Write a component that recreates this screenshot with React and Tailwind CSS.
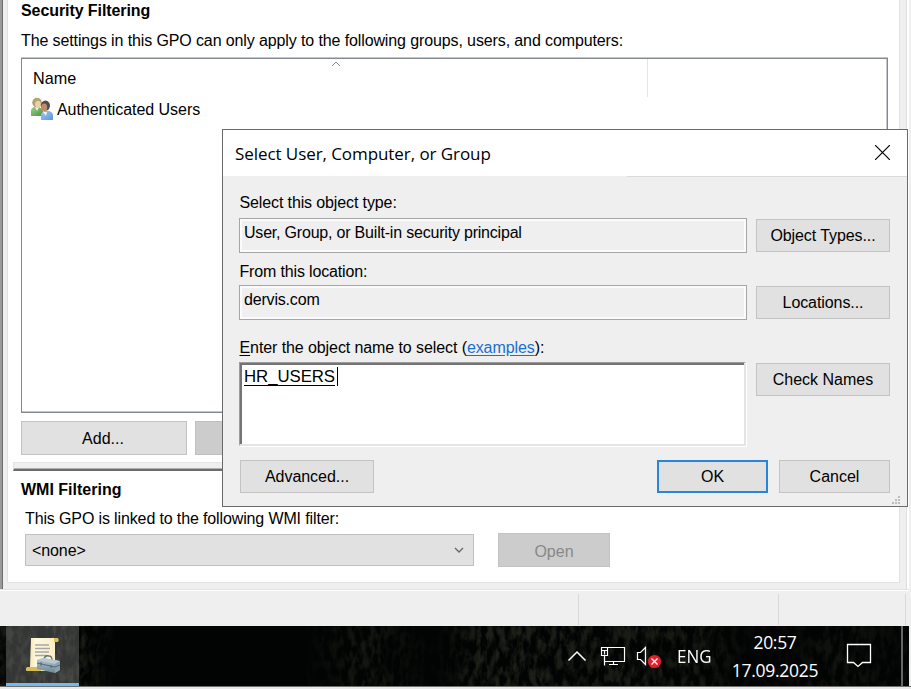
import React from "react";

const SANS = "font-['Liberation_Sans',Arial,sans-serif]";
const SEGOE = "font-['Open_Sans','Noto_Sans',sans-serif]";

function Button({ className = "", children }) {
  return (
    <button
      className={`flex h-[33px] shrink-0 items-center justify-center border border-[#c3c3c3] bg-[#e1e1e1] pt-px text-[16px] leading-5 whitespace-nowrap ${className}`}
    >
      {children}
    </button>
  );
}

function UsersIcon() {
  return (
    <svg className="block h-6 w-6 shrink-0" viewBox="0 0 24 24">
      <defs>
        <linearGradient id="green" x1="0" y1="0" x2="1" y2="1">
          <stop offset="0" stopColor="#9ccf8a" />
          <stop offset="1" stopColor="#4c9440" />
        </linearGradient>
        <linearGradient id="blue" x1="0" y1="0" x2="1" y2="1">
          <stop offset="0" stopColor="#9fc8f2" />
          <stop offset="1" stopColor="#5b96dc" />
        </linearGradient>
      </defs>
      <path d="M1 19v-5q0-3 3-4h5q3 1 4 4v5z" fill="url(#green)" />
      <path d="M5 10l2 4 2-4z" fill="#f2f6ea" />
      <ellipse cx="7" cy="5.600" rx="4.800" ry="4.800" fill="#b3a36c" />
      <ellipse cx="8" cy="7.200" rx="2.800" ry="3.500" fill="#efd0a6" />
      <path d="M11 23v-4q0-4 4-5h4q4 1 4 5v4z" fill="url(#blue)" />
      <path d="M13 15l3 4 1-4z" fill="#eef5fc" />
      <ellipse cx="15.400" cy="8.600" rx="4.600" ry="5.200" fill="#4d4d50" />
      <ellipse cx="14.200" cy="10.600" rx="3" ry="4" fill="#c08e66" />
    </svg>
  );
}

function GpmcIcon() {
  return (
    <svg className="block h-[37px] w-[35px]" viewBox="0 0 35 37">
      <defs>
        <linearGradient id="paper" x1="0" y1="0" x2="1" y2="0">
          <stop offset="0" stopColor="#efdc94" />
          <stop offset=".3" stopColor="#fdf8df" />
          <stop offset="1" stopColor="#f8ecc0" />
        </linearGradient>
        <linearGradient id="box" x1="0" y1="0" x2="0" y2="1">
          <stop offset="0" stopColor="#b5c5cf" />
          <stop offset="1" stopColor="#6f8795" />
        </linearGradient>
      </defs>
      <path d="M5 1h26q2 0 1 4h-3v24l-3 5H1q-2-1 0-4h3z" fill="url(#paper)" />
      <path d="M28 1h4q1 2 0 4h-4zM1 30h14v4H1q-1-2 0-4z" fill="#d9bd54" />
      <path d="M9 8h14M9 11.500h15M9 15h14M9 18.500h12" stroke="#a7a5a6" strokeWidth="1.300" />
      <path d="M18 22q1-4 5-3 3 0 3 4" fill="none" stroke="#62747e" strokeWidth="1.400" />
      <path d="M11 23l6-2 17 3v9l-5 3-18-4z" fill="url(#box)" />
      <path d="M11 23l6-2 17 3-5 3z" fill="#b7c8d2" />
      <path d="M29 27v9l5-3v-9z" fill="#8da2ae" />
      <path d="M11 26l18 4 5-2M15 25v4M25 28v3" fill="none" stroke="#4e6370" strokeWidth=".9" />
    </svg>
  );
}

function Foliage() {
  return (
    <svg className="absolute inset-0 h-full w-full opacity-65" preserveAspectRatio="none">
      <defs>
        <filter id="leaves" x="0" y="0" width="100%" height="100%" colorInterpolationFilters="sRGB">
          <feTurbulence type="fractalNoise" baseFrequency="0.16 0.07" numOctaves="4" seed="8" />
          <feColorMatrix values="0 0 0 0 .2  0 0 0 0 .22  0 0 0 0 .16  3.2 0 0 0 -1.25" />
        </filter>
        <linearGradient id="patches">
          <stop offset="0" stopColor="#999" />
          <stop offset=".09" stopColor="#bbb" />
          <stop offset=".13" stopColor="#000" />
          <stop offset=".33" stopColor="#000" />
          <stop offset=".4" stopColor="#999" />
          <stop offset=".48" stopColor="#111" />
          <stop offset=".53" stopColor="#ddd" />
          <stop offset=".76" stopColor="#aaa" />
          <stop offset=".83" stopColor="#222" />
          <stop offset=".92" stopColor="#777" />
          <stop offset="1" stopColor="#333" />
        </linearGradient>
        <mask id="patchMask">
          <rect width="100%" height="100%" fill="url(#patches)" />
        </mask>
      </defs>
      <g mask="url(#patchMask)">
        <rect width="100%" height="100%" filter="url(#leaves)" />
      </g>
    </svg>
  );
}

function Taskbar() {
  return (
    <div className={`relative flex h-[60px] w-[909px] shrink-0 overflow-hidden bg-[#020303] text-white ${SEGOE}`}>
      <Foliage />
      <div className="relative ml-1.5 flex h-full w-[73px] shrink-0 flex-col items-center border-b-[3px] border-[#76b9ed] bg-white/20 pt-[11px] pl-[2px]">
        <GpmcIcon />
      </div>
      <svg className="relative ml-[488px] h-[60px] w-[96px] shrink-0" viewBox="0 0 96 60" fill="none" stroke="#fff">
        <path d="M1.500 34.500l8.500-8.500 8.500 8.500" strokeWidth="1.500" />
        <path d="M40 21.500h17.500v14H37.500M46.500 35.500v3M42 38.500h9" strokeWidth="1.200" />
        <path d="M34.500 21.500h6v8h-6zM34.500 24.500h6M37.500 24.500v4M37.500 29.500v10" strokeWidth="1.200" />
        <path d="M70.500 26.500h3l5-5v17l-5-5h-3z" strokeWidth="1.200" />
        <circle cx="87.500" cy="35.500" r="6.600" fill="#e0202c" stroke="none" />
        <path d="M84.500 32.500l6 6M90.500 32.500l-6 6" strokeWidth="1.300" />
      </svg>
      <div className="relative ml-[14px] flex h-full w-[35px] shrink-0 items-center text-[18px] leading-6">
        <span className="origin-left scale-x-[0.94]">ENG</span>
      </div>
      <div className="relative ml-[17px] flex h-full w-[92px] shrink-0 flex-col items-center pt-[2px] text-[17.500px] leading-7 whitespace-nowrap">
        <span className="tracking-[-0.3px]">20:57</span>
        <span className="tracking-[-0.250px]">17.09.2025</span>
      </div>
      <svg className="relative mt-[17px] ml-[25px] h-[26px] w-[28px] shrink-0" viewBox="0 0 28 26" fill="none" stroke="#fff" strokeWidth="1.300">
        <path d="M1.500 1.500h23v18h-8l-4.500 4-4.500-4h-6z" />
      </svg>
      <div className="relative ml-[27px] h-full w-0.5 shrink-0 bg-[#666]" />
    </div>
  );
}

function ReadOnlyField({ children }) {
  return (
    <div className="h-[35px] w-[508px] shrink-0 border border-[#a5a5a5] bg-[#efefef] pt-[4px] pl-1 text-[16px] leading-5 whitespace-nowrap shadow-[inset_0_0_0_2px_#fbfbfb]">
      {children}
    </div>
  );
}

function Dialog() {
  return (
    <div className={`absolute top-[129px] left-[222px] flex h-[378px] w-[686px] flex-col border border-[#6a6a6a] bg-[#efefef] text-black ${SANS}`}>
      <div className="flex h-[46px] shrink-0 items-center justify-between bg-white pr-[17px] pl-3">
        <span className={`pt-px text-[17px] leading-6 tracking-[-0.070px] whitespace-nowrap ${SEGOE}`}>
          Select User, Computer, or Group
        </span>
        <svg className="mb-px h-[15px] w-[15px]" viewBox="0 0 15 15">
          <path d="M0 0l15 15M15 0L0 15" stroke="#000" strokeWidth="1.200" />
        </svg>
      </div>
      <div className="ml-auto h-px w-[280px] shrink-0 bg-[#dadada]" />
      <div className="flex h-[328px] flex-col pl-4 text-[16px] leading-5">
        <div className="mt-[16px] h-5 pl-[0.500px] tracking-[-0.120px]">Select this object type:</div>
        <div className="mt-[5px] flex items-start gap-[9px]">
          <ReadOnlyField>
            <span className="tracking-[-0.200px]">User, Group, or Built-in security principal</span>
          </ReadOnlyField>
          <Button className="mt-px w-[134px] tracking-[-0.080px]">Object Types...</Button>
        </div>
        <div className="mt-[9px] h-5 pl-[0.500px] tracking-[-0.160px]">From this location:</div>
        <div className="mt-[3px] flex items-start gap-[9px]">
          <ReadOnlyField>
            <span className="tracking-[-0.180px]">dervis.com</span>
          </ReadOnlyField>
          <Button className="mt-px w-[134px] tracking-[-0.080px]">Locations...</Button>
        </div>
        <div className="mt-[18px] h-5 pl-[0.500px] tracking-[-0.090px] whitespace-nowrap">
          <span className="underline underline-offset-2">E</span>nter the object name to select (
          <a className="text-[#1770cf] underline underline-offset-2">examples</a>):
        </div>
        <div className="mt-[4px] flex items-start">
          <div className="flex h-[84px] w-[507px] border-t border-r-2 border-b-2 border-l border-t-[#9c9c9c] border-r-[#e4e4e4] border-b-[#e4e4e4] border-l-[#9c9c9c] bg-white pt-1 pl-1 shadow-[inset_2px_2px_0_#747474,1px_1px_0_#fff]">
            <span className="h-5 text-[16.800px] leading-5 tracking-[-0.050px] underline decoration-1 underline-offset-[3px]">HR_USERS</span>
            <span className="ml-[2px] h-[19px] w-[1px] bg-black" />
          </div>
          <Button className="mt-px ml-[10px] w-[134px]">Check Names</Button>
        </div>
        <div className="mt-[14px] ml-px flex">
          <Button className="w-[134px] tracking-[-0.030px]">Advanced...</Button>
          <Button className="ml-[283px] w-[111px] border-2! border-[#2786dc]!">OK</Button>
          <Button className="ml-[11px] w-[111px]">Cancel</Button>
        </div>
      </div>
      <svg className="absolute right-[6px] bottom-[1px] h-[9px] w-[9px]" fill="#bdbdbd">
        <path d="M6 0h2v2h-2zM3 3h2v2h-2zM6 3h2v2h-2zM0 6h2v2h-2zM3 6h2v2h-2zM6 6h2v2h-2z" />
      </svg>
    </div>
  );
}

function SecurityPanel() {
  return (
    <div className="flex h-[583px] w-[893px] shrink-0 flex-col border-r border-b border-l border-[#e2e2e2] bg-white">
      <div className="ml-[13px] h-5 pt-px text-[16px] leading-5 font-bold tracking-[-0.080px]">Security Filtering</div>
      <div className="mt-[11px] ml-[13px] h-5 text-[16px] leading-5 tracking-[-0.115px] whitespace-nowrap">
        The settings in this GPO can only apply to the following groups, users, and computers:
      </div>
      <div className="mt-[7px] ml-[13px] h-[355px] w-[867px] shrink-0 border border-[#828790] shadow-[0_-1px_0_#c4c8cd,inset_-1px_0_0_#c4c8cd,inset_0_-1px_0_#c4c8cd]">
        <div className="flex h-[38px] w-[626px] border-r border-[#e5e5e5]">
          <span className="mt-[9px] ml-[11px] w-[298px] text-[16.200px] leading-5">Name</span>
          <svg className="mt-[2px] h-[6px] w-[10px]" viewBox="0 0 10 6" fill="none" stroke="#888">
            <path d="M1 5l4-4 4 4" />
          </svg>
        </div>
        <div className="ml-[8px] flex h-6 items-center">
          <UsersIcon />
          <span className="mt-px ml-[3px] text-[16px] leading-5 tracking-[-0.050px]">Authenticated Users</span>
        </div>
      </div>
      <div className="mt-[8px] ml-[13px] flex gap-[8px]">
        <Button className="h-[34px]! w-[166px] pt-0.5! pr-0.5">Add...</Button>
        <Button className="h-[34px]! w-[166px] border-[#bfbfbf]! bg-[#cccccc]!" />
      </div>
      <div className="mt-[7px] ml-[5px] h-[9px] shrink-0 border-t border-b-2 border-l border-t-[#e5e5e5] border-b-[#6c6c6c] border-l-[#e5e5e5] bg-[#efefef] shadow-[inset_0_-1px_0_#b0b0b0]" />
      <div className="mt-[9px] ml-[13px] h-5 text-[16px] leading-5 font-bold">WMI Filtering</div>
      <div className="mt-[9px] ml-[17px] h-5 text-[16px] leading-5 tracking-[-0.130px]">
        This GPO is linked to the following WMI filter:
      </div>
      <div className="mt-[4px] ml-[17px] flex items-center gap-[24px]">
        <div className="flex h-8 w-[449px] items-center justify-between border border-[#c0c0c0] bg-[#e1e1e1] pr-[9px] pl-[6px] text-[16px]">
          <span className="pt-0.5 tracking-[-0.100px]">&lt;none&gt;</span>
          <svg className="h-[6px] w-[10px]" viewBox="0 0 10 6" fill="none" stroke="#666" strokeWidth="1.300">
            <path d="M1 1l4 4 4-4" />
          </svg>
        </div>
        <Button className="h-[34px]! w-[112px] border-[#c3c3c3]! bg-[#cccccc]! pt-[3px]! text-[#888]">Open</Button>
      </div>
    </div>
  );
}

export default function App() {
  return (
    <div className={`relative flex h-[689px] w-[911px] flex-col overflow-hidden bg-[#efefef] text-black ${SANS}`}>
      <div className="flex h-[589px] shrink-0">
        <div className="w-0.5 bg-[#9a9a9a]" />
        <div className="w-px bg-[#6e6e6e]" />
        <div className="w-1 bg-[#efefef]" />
        <SecurityPanel />
        <div className="ml-[6px] w-px bg-[#dfdfdf]" />
        <div className="w-0.5 bg-white" />
      </div>
      <div className="h-px w-[909px] shrink-0 bg-[#e3e3e3]" />
      <div className="h-px w-[909px] shrink-0 bg-white" />
      <div className="flex h-[35px] shrink-0 pt-[3px]">
        <div className="h-[31px] w-[579px] border-r border-[#d9d9d9]" />
        <div className="h-[31px] w-[200px] border-r border-[#d9d9d9]" />
        <div className="h-[31px] w-[127px] border-r border-[#d9d9d9]" />
      </div>
      <Taskbar />
      <div className="h-px w-full shrink-0 bg-[#6d6d6d]" />
      <div className="h-0.5 w-full shrink-0 bg-[#e9e9e9]" />
      <Dialog />
    </div>
  );
}
